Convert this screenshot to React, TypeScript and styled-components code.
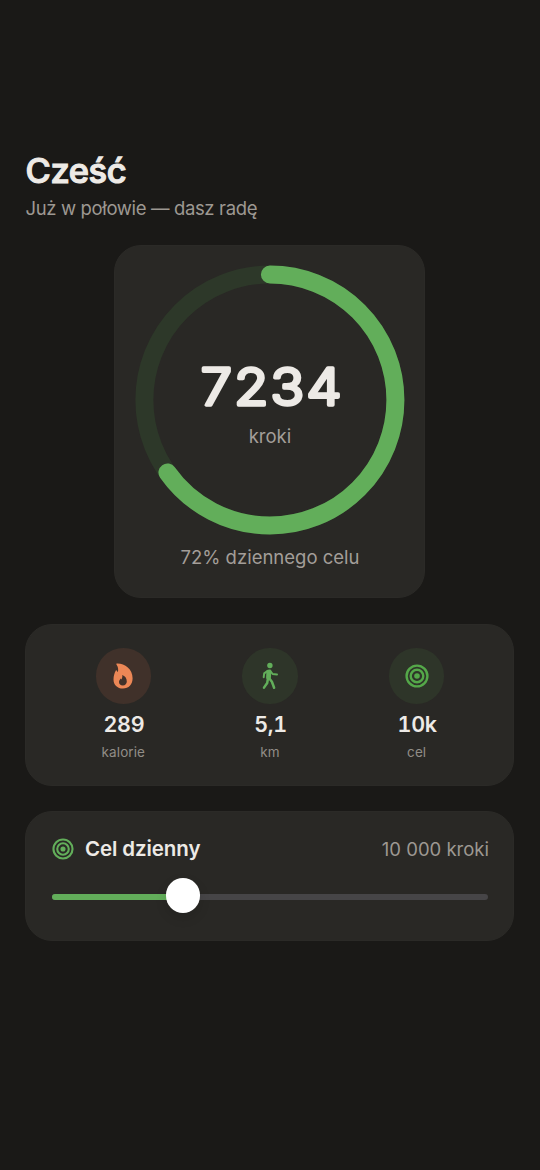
import React from "react";
import styled, { createGlobalStyle } from "styled-components";

const GREEN = "#62ae5a";
const TEXT = "#edeae6";
const MUTED = "#9d9892";

const GlobalStyle = createGlobalStyle`
  * { box-sizing: border-box; }
  body {
    margin: 0;
    background: #1a1917;
    font-family: Inter, "Liberation Sans", sans-serif;
    color: ${TEXT};
  }
`;

const Screen = styled.main`
  min-height: 1170px;
  padding: 148.5px 26px 0 25px;
  display: flex;
  flex-direction: column;
`;

const Header = styled.header`
  height: 96px;
  padding-left: 0.5px;
`;

const Title = styled.h1`
  margin: 0;
  font-size: 34.5px;
  line-height: 44px;
  font-weight: 500;
  letter-spacing: -0.4px;
  -webkit-text-stroke: 1.2px ${TEXT};
  stroke-linejoin: round;
`;

const Subtitle = styled.p`
  margin: 3px 0 0;
  font-size: 18.5px;
  line-height: 24px;
  letter-spacing: -0.36px;
  color: ${MUTED};
`;

const Card = styled.section`
  background: #292825;
  border: 1px solid #2b2a27;
  border-radius: 27px;
`;

const RingCard = styled(Card)`
  align-self: center;
  width: 311px;
  height: 353.5px;
  padding-top: 20px;
  display: flex;
  flex-direction: column;
  align-items: center;
`;

const Ring = styled.svg`
  display: block;
  width: 270px;
  height: 270px;
  flex: none;
  overflow: visible;
`;

const Percent = styled.div`
  margin-top: 9px;
  padding-left: 1px;
  font-size: 18.5px;
  line-height: 24px;
  color: #a39e99;
`;

const StatsCard = styled(Card)`
  margin-top: 26px;
  height: 161.5px;
  padding: 23px 23px 0 24px;
  display: grid;
  grid-template-columns: repeat(3, 1fr);
`;

const Stat = styled.div`
  display: flex;
  flex-direction: column;
  align-items: center;
`;

const Badge = styled.div<{ $tint: string }>`
  width: 55.5px;
  height: 55.5px;
  border-radius: 50%;
  background: ${(p) => p.$tint};
  display: flex;
  align-items: center;
  justify-content: center;
`;

const Value = styled.div`
  margin-top: 7px;
  padding-left: 1px;
  font-size: 21.5px;
  line-height: 26px;
  font-weight: 600;
  font-variant-numeric: tabular-nums;
  letter-spacing: -0.3px;
`;

const Caption = styled.div`
  margin-top: 6px;
  font-size: 13.5px;
  line-height: 18px;
  letter-spacing: 0.1px;
  color: #918d87;
`;

const GoalCard = styled(Card)`
  margin-top: 25.5px;
  height: 129.5px;
  padding: 21.5px 24px 0 26px;
`;

const GoalRow = styled.div`
  height: 30px;
  display: flex;
  align-items: center;
`;

const GoalName = styled.span`
  margin-left: 11px;
  font-size: 20.5px;
  font-weight: 580;
  letter-spacing: -0.1px;
`;

const GoalValue = styled.span`
  margin-left: auto;
  font-size: 18.5px;
  color: ${MUTED};
`;

const Track = styled.div`
  margin: 30.5px 1px 0 0;
  height: 5.5px;
  border-radius: 3px;
  background: #464547;
  display: flex;
  align-items: center;
`;

const Fill = styled.div`
  width: 30%;
  height: 100%;
  border-radius: 3px;
  background: ${GREEN};
`;

const Thumb = styled.div`
  flex: none;
  width: 34.5px;
  height: 34.5px;
  margin: -2.5px 0 0 -17px;
  border-radius: 50%;
  background: #fff;
  box-shadow: 0 5px 12px rgba(0, 0, 0, 0.12);
`;

const TargetIcon = ({
  size,
  color = GREEN,
  weight = 2.3,
}: {
  size: number;
  color?: string;
  weight?: number;
}) => (
  <svg width={size} height={size} viewBox="0 0 24 24" fill="none" stroke={color} strokeWidth={weight}>
    <circle cx="12" cy="12" r="10.4" />
    <circle cx="12" cy="12" r="6.3" />
    <circle cx="12" cy="12" r="2.8" fill={color} stroke="none" />
  </svg>
);

const FlameIcon = () => (
  <svg width="20" height="26" viewBox="0 0 20 26">
    <path
      fill="#ec8756"
      fillRule="evenodd"
      d="M4.1.6C11.6.4 19.6 6.2 19.6 15.2C19.6 21.4 15.6 25.5 10 25.5C4.3 25.5.5 21.7.5 16.4C.5 13 1.5 9.9 2.7 7.7C3 7.2 3.5 7.2 3.8 7.7C4.1 8.2 4.4 8.6 4.9 8.9C5.5 6.3 5.2 3.8 3.6 1.7C3.1 1.1 3.4.6 4.1.6ZM9.2 12.1C9.6 13.8 9.2 15.2 8.5 16.4C8.1 16.2 7.9 15.9 7.7 15.4C6.7 16.6 6 17.8 6 19.1C6 21.2 7.6 22.5 9.8 22.5C12.2 22.5 13.8 21 13.8 18.6C13.8 15.3 12 13 9.2 12.1Z"
    />
  </svg>
);

const WalkIcon = () => (
  <svg
    width="18"
    height="28"
    viewBox="0 0 18 28"
    fill="none"
    stroke={GREEN}
    strokeLinecap="round"
    strokeLinejoin="round"
  >
    <circle cx="8.9" cy="3.5" r="2.7" fill={GREEN} stroke="none" />
    <path d="M6.9 9.3L8.8 9.1L8.4 16L6.6 15.8Z" fill={GREEN} strokeWidth="3" />
    <path d="M6.4 9L3.2 11.4L2.7 15.2" strokeWidth="2" />
    <path d="M9.4 9L11.6 12L16 12.4" strokeWidth="2" />
    <path d="M8.2 16.2L10.9 19.8L13.1 25.8" strokeWidth="2.5" />
    <path d="M6.9 16.8L6.2 21L3 25.6" strokeWidth="2.5" />
  </svg>
);

const StepsRing = () => {
  const radius = 125.5;
  return (
    <Ring viewBox="0 0 270 270">
      <circle cx="134.9" cy="134" r={radius} fill="none" stroke="#2d3829" strokeWidth="18" />
      <circle
        cx="134.9"
        cy="134"
        r={radius}
        fill="none"
        stroke={GREEN}
        strokeWidth="18"
        strokeLinecap="round"
        pathLength={100}
        strokeDasharray="65.2 100"
        transform="rotate(-90 134.9 134)"
      />
      <text
        transform="translate(137.3 139.2) scale(1.1 1)"
        textAnchor="middle"
        fontSize="50.5"
        fontWeight="350"
        letterSpacing="2.1"
        fill={TEXT}
        stroke={TEXT}
        strokeWidth="3.6"
        strokeLinejoin="round"
      >
        7234
      </text>
      <text x="134.9" y="177" textAnchor="middle" fontSize="18.5" fill="#a39e99">
        kroki
      </text>
    </Ring>
  );
};

const stats = [
  { value: "289", label: "kalorie", tint: "#40312a", icon: <FlameIcon /> },
  { value: "5,1", label: "km", tint: "#2e3529", icon: <WalkIcon /> },
  { value: "10k", label: "cel", tint: "#2e3529", icon: <TargetIcon size={24} color="#54a849" weight={2.4} /> },
];

export default function App() {
  return (
    <Screen>
      <GlobalStyle />
      <Header>
        <Title>Cześć</Title>
        <Subtitle>Już w połowie — dasz radę</Subtitle>
      </Header>
      <RingCard>
        <StepsRing />
        <Percent>72% dziennego celu</Percent>
      </RingCard>
      <StatsCard>
        {stats.map((s) => (
          <Stat key={s.label}>
            <Badge $tint={s.tint}>{s.icon}</Badge>
            <Value>{s.value}</Value>
            <Caption>{s.label}</Caption>
          </Stat>
        ))}
      </StatsCard>
      <GoalCard>
        <GoalRow>
          <TargetIcon size={22} />
          <GoalName>Cel dzienny</GoalName>
          <GoalValue>10 000 kroki</GoalValue>
        </GoalRow>
        <Track>
          <Fill />
          <Thumb />
        </Track>
      </GoalCard>
    </Screen>
  );
}
